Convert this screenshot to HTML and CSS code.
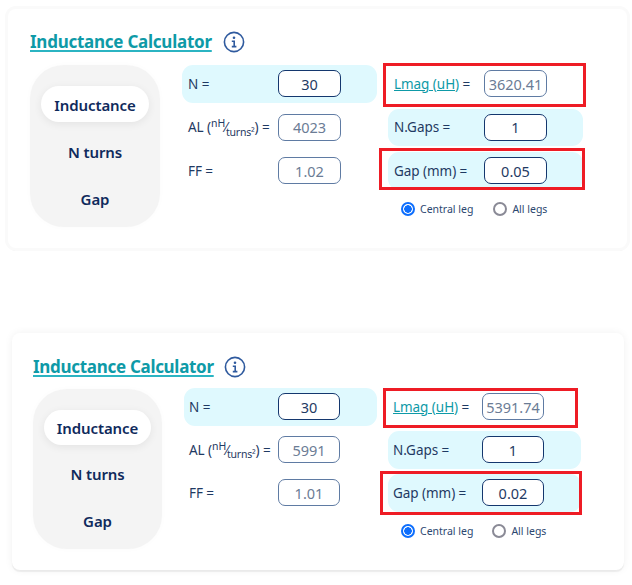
FILE: index.html
```html
<!DOCTYPE html>
<html lang="en">
<head>
<meta charset="utf-8">
<title>Inductance Calculator</title>
<link rel="stylesheet" href="styles.css">
</head>
<body>
<section class="card card-a">
  <h2 class="title"><a href="#">Inductance Calculator</a>
    <svg class="info" viewBox="0 0 22 22"><circle cx="11" cy="11" r="9.6"/><circle class="dot" cx="11" cy="6.8" r="1.3"/><path d="M8.8 10.2h2.4v5.2M8.8 15.6h4.6"/></svg>
  </h2>
  <div class="body">
    <nav class="tabs">
      <span class="tab active">Inductance</span>
      <span class="tab">N turns</span>
      <span class="tab">Gap</span>
    </nav>
    <div class="col col-left">
      <div class="row hl"><span class="lbl">N =</span><span class="inp on">30</span></div>
      <div class="row"><span class="lbl">AL (<sup>nH</sup>⁄<sub>turns²</sub>) =</span><span class="inp">4023</span></div>
      <div class="row"><span class="lbl">FF =</span><span class="inp">1.02</span></div>
    </div>
    <div class="col col-right">
      <div class="row"><span class="lbl"><a href="#">Lmag (uH)</a> =</span><span class="inp">3620.41</span></div>
      <div class="row hl"><span class="lbl">N.Gaps =</span><span class="inp on">1</span></div>
      <div class="row hl"><span class="lbl">Gap (mm) =</span><span class="inp on">0.05</span></div>
      <div class="radios">
        <span class="radio"><i class="dot-r sel"></i>Central leg</span>
        <span class="radio"><i class="dot-r"></i>All legs</span>
      </div>
    </div>
  </div>
  <div class="mark mark-1"></div>
  <div class="mark mark-2"></div>
</section>
<section class="card card-b">
  <h2 class="title"><a href="#">Inductance Calculator</a>
    <svg class="info" viewBox="0 0 22 22"><circle cx="11" cy="11" r="9.6"/><circle class="dot" cx="11" cy="6.8" r="1.3"/><path d="M8.8 10.2h2.4v5.2M8.8 15.6h4.6"/></svg>
  </h2>
  <div class="body">
    <nav class="tabs">
      <span class="tab active">Inductance</span>
      <span class="tab">N turns</span>
      <span class="tab">Gap</span>
    </nav>
    <div class="col col-left">
      <div class="row hl"><span class="lbl">N =</span><span class="inp on">30</span></div>
      <div class="row"><span class="lbl">AL (<sup>nH</sup>⁄<sub>turns²</sub>) =</span><span class="inp">5991</span></div>
      <div class="row"><span class="lbl">FF =</span><span class="inp">1.01</span></div>
    </div>
    <div class="col col-right">
      <div class="row"><span class="lbl"><a href="#">Lmag (uH)</a> =</span><span class="inp">5391.74</span></div>
      <div class="row hl"><span class="lbl">N.Gaps =</span><span class="inp on">1</span></div>
      <div class="row hl"><span class="lbl">Gap (mm) =</span><span class="inp on">0.02</span></div>
      <div class="radios">
        <span class="radio"><i class="dot-r sel"></i>Central leg</span>
        <span class="radio"><i class="dot-r"></i>All legs</span>
      </div>
    </div>
  </div>
  <div class="mark mark-1"></div>
  <div class="mark mark-2"></div>
</section>
</body>
</html>
```
FILE: styles.css
```css
* { box-sizing: border-box; }
html, body { margin: 0; padding: 0; }
body { width: 632px; height: 585px; overflow: hidden; background: #fff; font-family: "Noto Sans", "Open Sans", sans-serif; color: #1f3a63; padding-top: 9px; }
.card { position: relative; background: #fff; border-radius: 8px; }
.card-a { margin-left: 8px; width: 619px; height: 239px; padding: 22px 0 0 22px; box-shadow: 0 0 0 3px #fafafa, 0 3px 0 #ededed; }
.card-b { margin: 85px 0 0 12px; width: 612px; height: 237px; padding: 23px 0 0 21px; box-shadow: 0 0 9px rgba(0,0,0,.06), 0 2px 1px rgba(0,0,0,.06); }
.title { margin: 0 0 12px; height: 22px; display: flex; align-items: center; font-size: 17px; font-weight: 700; letter-spacing: -.25px; line-height: 22px; }
.card-b .title { margin-bottom: 11px; letter-spacing: -.3px; }
.title a { color: #0e9aa7; text-decoration: underline; text-decoration-color: #2bb4c2; text-decoration-thickness: 1.5px; text-underline-offset: 2px; }
.info { width: 22px; height: 22px; margin-left: 11px; fill: none; stroke: #2f5a9e; stroke-width: 1.6; }
.card-b .info { margin-left: 10px; }
.info .dot { fill: #2f5a9e; stroke: none; }
.body { display: flex; align-items: flex-start; }
.tabs { width: 130px; height: 162px; background: #f4f4f4; border-radius: 34px; padding: 21px 11px 0; display: flex; flex-direction: column; box-shadow: 0 0 6px rgba(0,0,0,.02); }
.card-b .tabs { width: 129px; height: 160px; }
.tab { height: 37px; margin-bottom: 11px; padding-top: 1px; display: flex; align-items: center; justify-content: center; border-radius: 19px; font-size: 15px; font-weight: 600; color: #0f2a5c; letter-spacing: -.1px; }
.card-b .tab { height: 36px; margin-bottom: 11.5px; }
.tab.active { background: #fff; box-shadow: 0 2px 8px rgba(0,0,0,.07); }
.col { display: flex; flex-direction: column; gap: 6px; width: 195px; }
.card-b .col { gap: 5.5px; width: 193px; margin-top: -1px; }
.col-left { margin-left: 22px; }
.col-right { margin-left: 11px; }
.row { height: 37.5px; display: flex; align-items: center; padding-left: 6px; border-radius: 11px; font-size: 13.5px; color: #1f3a63; }
.card-b .row { padding-left: 5px; }
.hl { background: #dff9fe; }
.lbl { white-space: nowrap; letter-spacing: -.05px; }
.lbl a { color: #0e9aa7; text-decoration: underline; }
.lbl sup, .lbl sub { font-size: 10.5px; line-height: 0; }
.lbl sub { margin-left: -1px; letter-spacing: -.2px; }
.inp { position: absolute; width: 63px; height: 27px; display: flex; align-items: center; justify-content: center; border: 1px solid #5f7ba3; border-radius: 7px; background: #fff; font-size: 14.5px; color: #6b7c95; }
.inp.on { border-color: #14376e; color: #1f3a63; }
.col-left .inp { left: 270px; }
.col-right .inp { left: 476px; }
.card-b .col-left .inp { left: 266px; width: 62px; }
.card-b .col-right .inp { left: 470px; width: 62px; }
.radios { display: flex; gap: 20px; padding-left: 13px; margin-top: 6px; font-size: 10.5px; color: #2c4770; }
.card-b .radios { gap: 19px; margin-top: 7px; }
.radio { display: flex; align-items: center; gap: 5px; }
.dot-r { width: 14px; height: 14px; border-radius: 50%; border: 2px solid #8a8a96; background: #fff; }
.dot-r.sel { border-color: #0d6efd; background: radial-gradient(circle, #0d6efd 0 3.5px, #fff 4px); }
.mark { position: absolute; border: 3px solid #ee1c25; }
.card-a .mark-1 { left: 375px; top: 54px; width: 203px; height: 44px; }
.card-a .mark-2 { left: 371px; top: 139px; width: 206px; height: 42px; }
.card-b .mark-1 { left: 371px; top: 55px; width: 195px; height: 40px; }
.card-b .mark-2 { left: 368px; top: 138px; width: 202px; height: 44px; }
```
